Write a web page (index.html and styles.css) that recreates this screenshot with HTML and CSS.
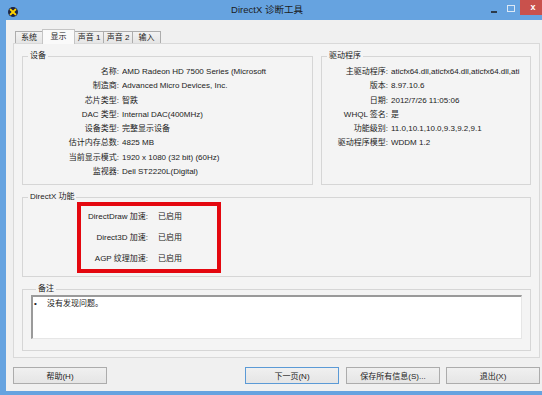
FILE: index.html
```html
<!DOCTYPE html>
<html lang="zh-CN">
<head>
    <meta charset="UTF-8">
    <title>DirectX 诊断工具</title>
    <link rel="stylesheet" href="styles.css">
</head>
<body>
    <div class="window">
        <div class="titlebar">
            <div class="tb-left">
                <svg class="app-icon" width="10" height="10" viewBox="0 0 10 10">
                    <circle cx="5" cy="5" r="5" fill="#1d2544"/>
                    <path d="M2.6 2.6 L7.4 7.4 M7.4 2.6 L2.6 7.4" stroke="#ffd400" stroke-width="2" stroke-linecap="round"/>
                </svg>
            </div>
            <div class="tb-title">DirectX 诊断工具</div>
            <div class="tb-controls">
                <span class="ctl-min"></span>
                <span class="ctl-max"></span>
                <span class="ctl-close">x</span>
            </div>
        </div>

        <div class="client">
            <div class="tabs">
                <div class="tab tab-system">系统</div>
                <div class="tab tab-display active">显示</div>
                <div class="tab tab-sound">声音 1</div>
                <div class="tab tab-sound">声音 2</div>
                <div class="tab tab-input">输入</div>
            </div>

            <div class="panel">
                <div class="top-groups">
                    <fieldset class="group device">
                        <legend>设备</legend>
                        <dl class="props device-props">
                            <dt>名称:</dt><dd>AMD Radeon HD 7500 Series (Microsoft</dd>
                            <dt>制造商:</dt><dd>Advanced Micro Devices, Inc.</dd>
                            <dt>芯片类型:</dt><dd>智跌</dd>
                            <dt>DAC 类型:</dt><dd>Internal DAC(400MHz)</dd>
                            <dt>设备类型:</dt><dd>完整显示设备</dd>
                            <dt>估计内存总数:</dt><dd>4825 MB</dd>
                            <dt>当前显示模式:</dt><dd>1920 x 1080 (32 bit) (60Hz)</dd>
                            <dt>监视器:</dt><dd>Dell ST2220L(Digital)</dd>
                        </dl>
                    </fieldset>
                    <fieldset class="group driver">
                        <legend>驱动程序</legend>
                        <dl class="props driver-props">
                            <dt>主驱动程序:</dt><dd>aticfx64.dll,aticfx64.dll,aticfx64.dll,ati</dd>
                            <dt>版本:</dt><dd>8.97.10.6</dd>
                            <dt>日期:</dt><dd>2012/7/26 11:05:06</dd>
                            <dt>WHQL 签名:</dt><dd>是</dd>
                            <dt>功能级别:</dt><dd>11.0,10.1,10.0,9.3,9.2,9.1</dd>
                            <dt>驱动程序模型:</dt><dd>WDDM 1.2</dd>
                        </dl>
                    </fieldset>
                </div>

                <fieldset class="group dx">
                    <legend>DirectX 功能</legend>
                    <div class="highlight">
                        <dl class="features">
                            <dt>DirectDraw 加速:</dt><dd>已启用</dd>
                            <dt>Direct3D 加速:</dt><dd>已启用</dd>
                            <dt>AGP 纹理加速:</dt><dd>已启用</dd>
                        </dl>
                    </div>
                </fieldset>

                <fieldset class="group notes">
                    <legend>备注</legend>
                    <div class="notes-box">
                        <div class="note"><span class="bullet">•</span>没有发现问题。</div>
                    </div>
                </fieldset>
            </div>

            <div class="buttons">
                <button type="button">帮助(H)</button>
                <button type="button" class="default next">下一页(N)</button>
                <button type="button">保存所有信息(S)...</button>
                <button type="button">退出(X)</button>
            </div>
        </div>
    </div>
</body>
</html>
```

FILE: styles.css
```css
* {
    box-sizing: border-box;
}

body {
    margin: 0;
    width: 542px;
    height: 395px;
    overflow: hidden;
    background-color: #66a3e0;
    font-family: "Liberation Sans", "Noto Sans CJK SC", sans-serif;
    font-size: 8px;
    color: #222;
}

.window {
    height: 395px;
    display: flex;
    flex-direction: column;
}

/* title bar */
.titlebar {
    height: 20px;
    display: grid;
    grid-template-columns: 1fr auto 1fr;
    align-items: start;
}

.tb-left {
    padding: 7px 0 0 8px;
}

.app-icon {
    display: block;
}

.tb-title {
    font-size: 9.5px;
    line-height: 20px;
    color: #1b1b1b;
    padding-right: 8px;
}

.tb-controls {
    justify-self: end;
    display: flex;
    align-items: flex-start;
}

.ctl-min {
    width: 6px;
    height: 2px;
    background-color: #2c3a4a;
    margin: 11px 10px 0 0;
}

.ctl-max {
    width: 8px;
    height: 7px;
    border: 1px solid #dbe8f5;
    margin: 5px 5px 0 0;
}

.ctl-close {
    width: 22px;
    height: 15px;
    background-color: #c9514c;
    color: #fff;
    font-weight: bold;
    font-size: 9px;
    line-height: 14px;
    padding-left: 4px;
    text-align: center;
}

/* client area */
.client {
    flex: 1;
    margin: 0 0 4px 6px;
    background-color: #f0f0f0;
    padding-top: 9px;
}

.tabs {
    display: flex;
    align-items: flex-end;
    height: 14px;
    margin-left: 9px;
}

.tab {
    height: 12px;
    line-height: 11px;
    text-align: center;
    border: 1px solid #adadad;
    border-bottom: none;
    background: linear-gradient(#f2f2f2, #e5e5e5);
}

.tab + .tab {
    margin-left: -1px;
}

.tab-system { width: 28px; }
.tab-display { width: 33px; }
.tab-sound { width: 30px; }
.tab-input { width: 29px; }

.tab.active {
    position: relative;
    height: 15px;
    line-height: 13px;
    margin-bottom: -1px;
    background: #fafafa;
    border-color: #c4c4c4;
}

.panel {
    height: 315px;
    margin: 0 2px 0 7px;
    border: 1px solid #d9d9d9;
    background-color: #f4f4f4;
    padding: 7px 8px 0 8px;
}

.top-groups {
    display: flex;
    gap: 8px;
}

.group {
    margin: 0;
    min-width: 0;
    padding: 4px 0 5px 0;
    border: 1px solid #d6d6d6;
}

.group legend {
    margin-left: 5px;
    padding: 0 2px;
    line-height: 10px;
    color: #222;
}

.device {
    width: 291px;
}

.driver {
    flex: 1;
}

.props {
    display: grid;
    margin: 0;
    column-gap: 3px;
    line-height: 14.3px;
}

.device-props {
    grid-template-columns: 96px 1fr;
}

.driver-props {
    grid-template-columns: 66px 1fr;
}

.props dt,
.features dt {
    text-align: right;
    white-space: nowrap;
}

.props dd,
.features dd {
    margin: 0;
    white-space: nowrap;
    overflow: hidden;
}

/* DirectX features */
.dx {
    margin-top: 7px;
    padding: 0 0 3px 0;
}

.highlight {
    width: 144px;
    margin-left: 54px;
    border: 4px solid #e4070f;
}

.features {
    display: grid;
    grid-template-columns: 67px 1fr;
    column-gap: 10px;
    margin: 0;
    line-height: 21px;
}

/* notes */
.notes {
    margin-top: 7px;
    padding: 1px 8px 11px 8px;
}

.notes-box {
    height: 44px;
    background-color: #fff;
    border-style: solid;
    border-width: 2px 1px 1px 2px;
    border-color: #9a9a9a #e6e6e6 #e6e6e6 #9a9a9a;
}

.note {
    padding: 2px 0 0 1px;
    line-height: 10px;
}

.bullet {
    display: inline-block;
    width: 13px;
}

/* bottom buttons */
.buttons {
    display: flex;
    gap: 6px;
    margin-top: 9px;
    padding: 0 2px 0 7px;
}

.buttons button {
    width: 94px;
    height: 17px;
    padding: 0;
    font-family: inherit;
    font-size: 8px;
    color: #222;
    border: 1px solid #acacac;
    background: linear-gradient(#f0f0f0, #e5e5e5);
}

.buttons .next {
    margin-left: auto;
    margin-right: 1px;
}

.buttons .default {
    border-color: #5b9ad6;
}
```
